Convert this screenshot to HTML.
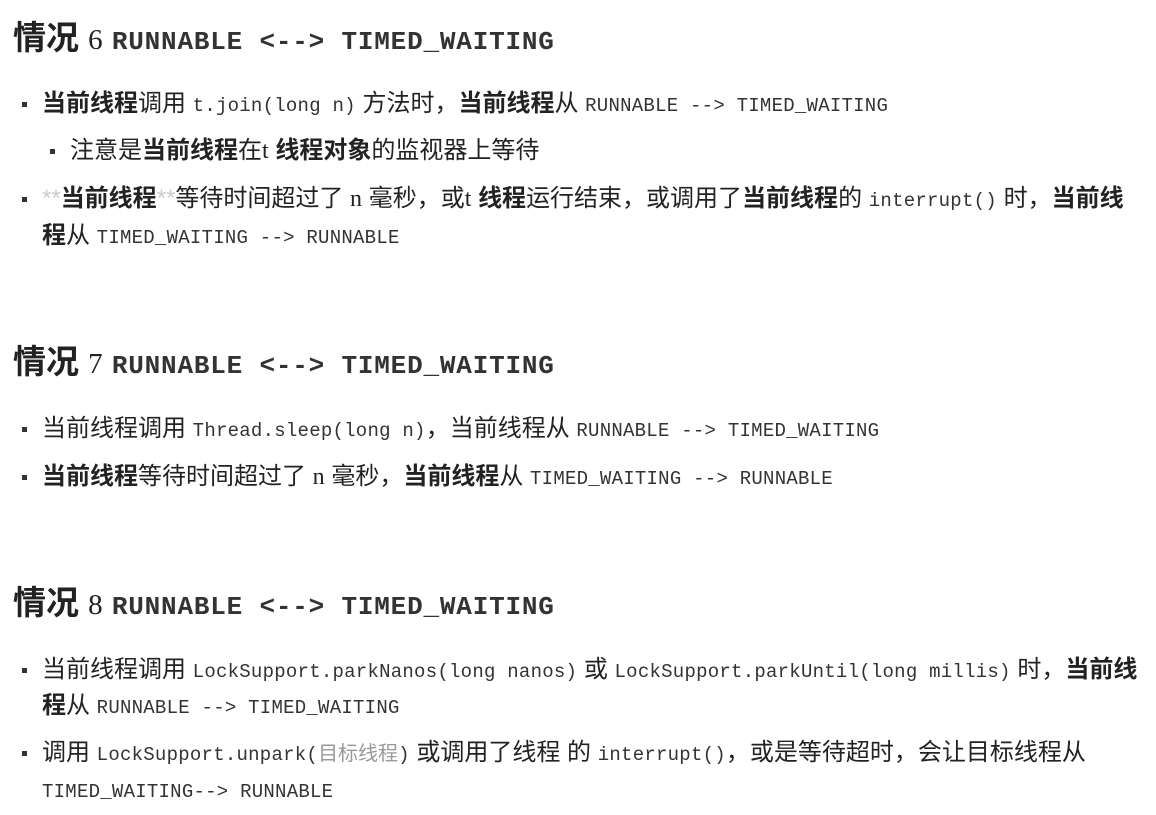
<!DOCTYPE html>
<html><head><meta charset="utf-8"><style>
body{margin:0;width:1156px;height:815px;background:#fff;overflow:hidden;color:#222;font-family:"Liberation Sans","Noto Sans CJK SC",sans-serif;}
.l{position:absolute;white-space:nowrap;font-size:24px;line-height:30px;height:30px;}
.h{font-size:33px;font-weight:bold;line-height:40px;height:40px;left:13px;}
.h .n{font-family:"Liberation Serif",serif;font-weight:normal;font-size:29px;}
.h .m{font-family:"Liberation Mono",monospace;font-size:26px;letter-spacing:0.8px;font-weight:bold;}
.m{font-family:"Liberation Mono",monospace;font-size:19px;letter-spacing:0.25px;color:#333;}
b{font-weight:bold;}
.g{color:#ccc;}
.sq{position:absolute;width:5px;height:5px;background:#333;}
</style></head><body>
<div class="l h" style="top:18px">情况 <span class="n">6</span> <span class="m">RUNNABLE &lt;--&gt; TIMED_WAITING</span></div>
<div class="sq" style="left:22px;top:102px"></div>
<div class="l" style="left:42px;top:89px"><b>当前线程</b>调用 <span class="m">t.join(long n)</span> 方法时，<b>当前线程</b>从 <span class="m">RUNNABLE --&gt; TIMED_WAITING</span></div>
<div class="sq" style="left:50px;top:149px"></div>
<div class="l" style="left:70px;top:136px">注意是<b>当前线程</b>在<span style="font-family:'Liberation Serif'">t</span> <b>线程对象</b>的监视器上等待</div>
<div class="sq" style="left:22px;top:197px"></div>
<div class="l" style="left:42px;top:184px"><span class="g">**</span><b>当前线程</b><span class="g">**</span>等待时间超过了 <span style="font-family:'Liberation Serif'">n</span> 毫秒，或<span style="font-family:'Liberation Serif'">t</span> <b>线程</b>运行结束，或调用了<b>当前线程</b>的 <span class="m">interrupt()</span> 时，<b>当前线</b></div>
<div class="l" style="left:42px;top:221px"><b>程</b>从 <span class="m">TIMED_WAITING --&gt; RUNNABLE</span></div>

<div class="l h" style="top:342px">情况 <span class="n">7</span> <span class="m">RUNNABLE &lt;--&gt; TIMED_WAITING</span></div>
<div class="sq" style="left:22px;top:427px"></div>
<div class="l" style="left:42px;top:414px">当前线程调用 <span class="m">Thread.sleep(long n)</span>，当前线程从 <span class="m">RUNNABLE --&gt; TIMED_WAITING</span></div>
<div class="sq" style="left:22px;top:475px"></div>
<div class="l" style="left:42px;top:462px"><b>当前线程</b>等待时间超过了 <span style="font-family:'Liberation Serif'">n</span> 毫秒，<b>当前线程</b>从 <span class="m">TIMED_WAITING --&gt; RUNNABLE</span></div>

<div class="l h" style="top:583px">情况 <span class="n">8</span> <span class="m">RUNNABLE &lt;--&gt; TIMED_WAITING</span></div>
<div class="sq" style="left:22px;top:668px"></div>
<div class="l" style="left:42px;top:655px">当前线程调用 <span class="m">LockSupport.parkNanos(long nanos)</span> 或 <span class="m">LockSupport.parkUntil(long millis)</span> 时，<b>当前线</b></div>
<div class="l" style="left:42px;top:691px"><b>程</b>从 <span class="m">RUNNABLE --&gt; TIMED_WAITING</span></div>
<div class="sq" style="left:22px;top:751px"></div>
<div class="l" style="left:42px;top:738px">调用 <span class="m">LockSupport.unpark(</span><span style="color:#999;font-size:20px">目标线程</span><span class="m">)</span> 或调用了线程 的 <span class="m">interrupt()</span>，或是等待超时，会让目标线程从</div>
<div class="l" style="left:42px;top:775px"><span class="m">TIMED_WAITING--&gt; RUNNABLE</span></div>
</body></html>
